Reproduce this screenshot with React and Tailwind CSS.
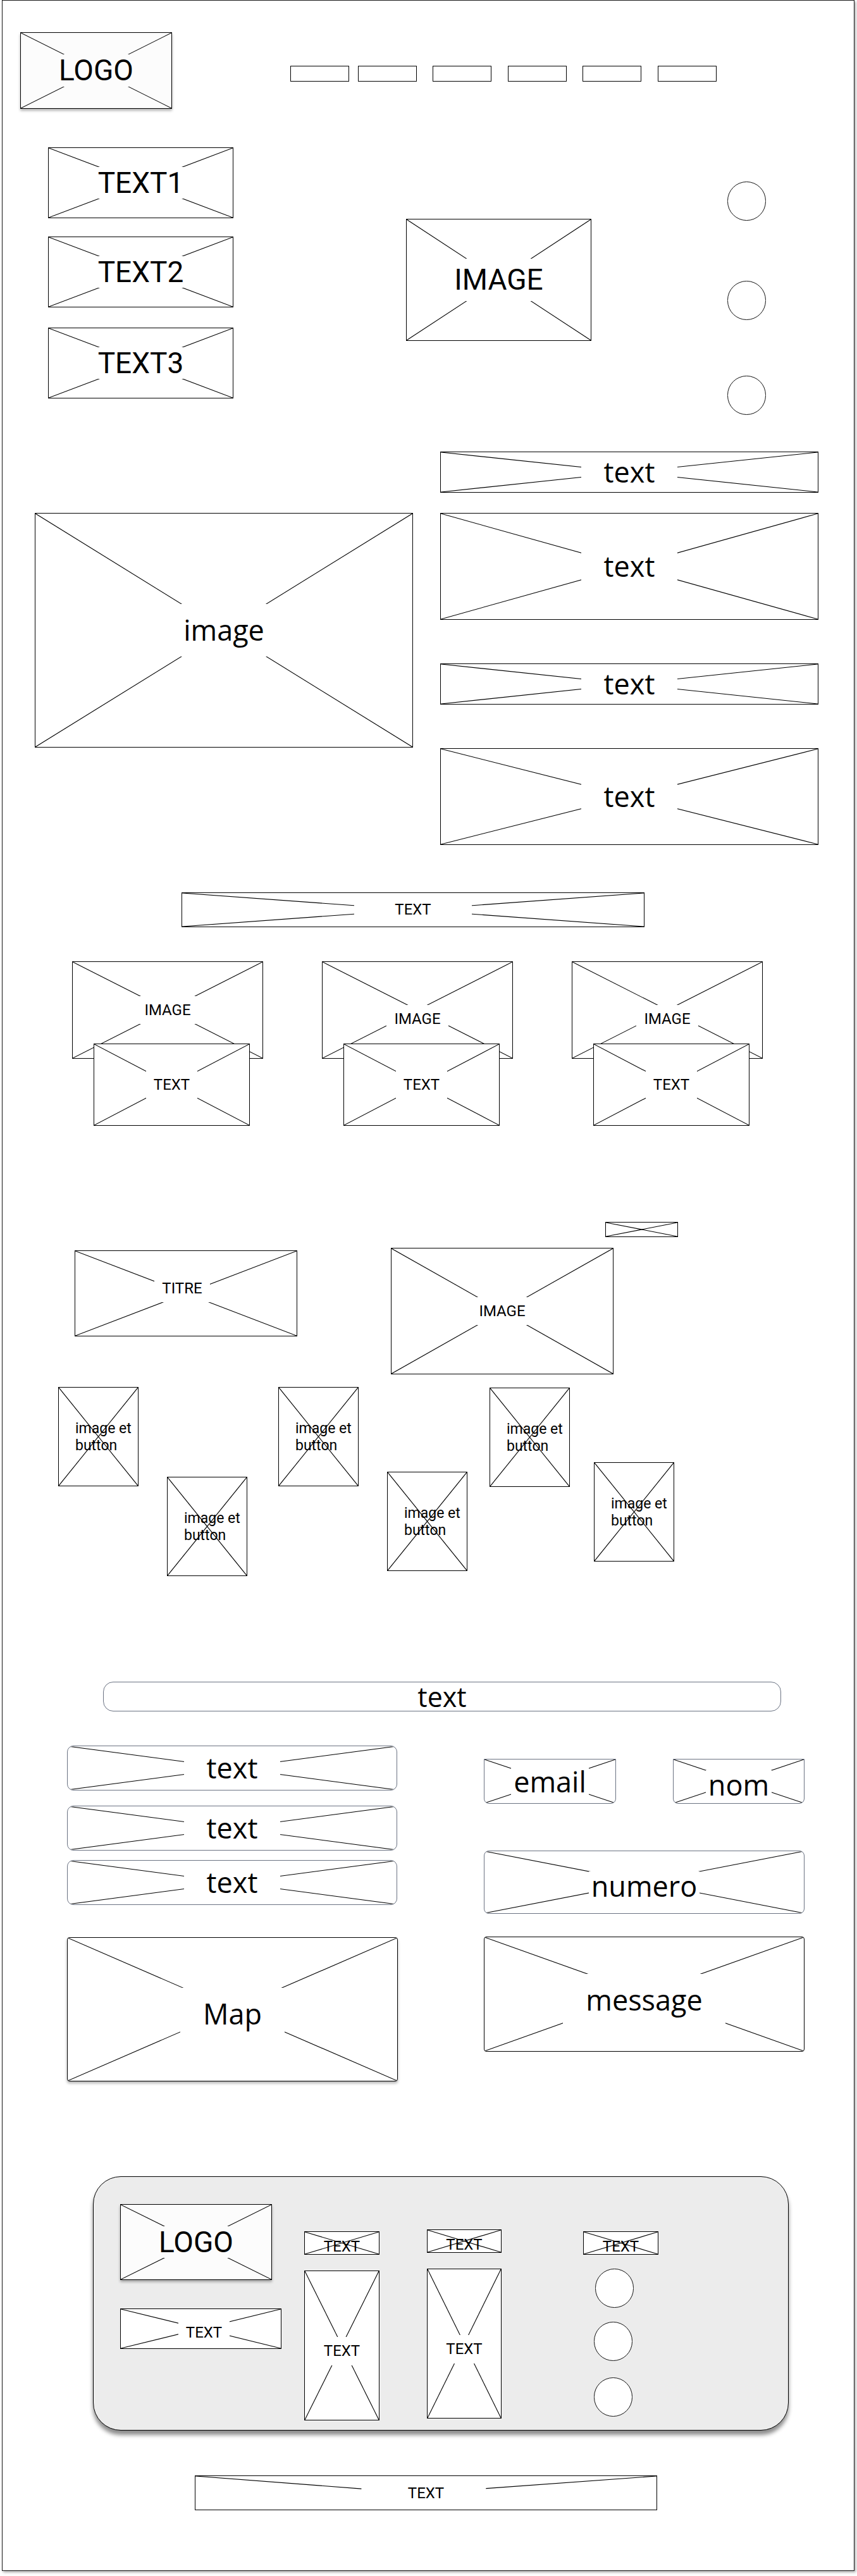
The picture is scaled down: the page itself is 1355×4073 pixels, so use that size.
import React from "react";

const R = "font-[Roboto,sans-serif]";
const O = "font-['Open_Sans',sans-serif]";

const bigR = `${R} bg-inherit px-[3px] text-[46px] leading-[1.1]`;
const imgR = `${R} bg-inherit px-3 py-2 text-[46px] leading-[1.1]`;
const txt = `${O} bg-inherit px-9 py-3 text-[45px] leading-[1.3]`;
const tight = `${O} bg-inherit px-1 text-[45px] leading-[1]`;
const smR = `${R} bg-inherit px-3 py-2 text-[24px] leading-[1.2]`;
const wideR = `${R} bg-inherit px-16 py-1 text-[24px] leading-[1.2]`;
const btn = `${R} self-center ml-[26px] mr-auto text-[23px] leading-[27px]`;

function Cross({ mode }) {
  if (mode === "top") {
    return (
      <svg className="pointer-events-none absolute inset-0 h-full w-full" viewBox="0 0 100 100" preserveAspectRatio="none">
        <line x1="0" y1="0" x2="36" y2="38" stroke="#000" strokeWidth="1.1" vectorEffect="non-scaling-stroke" />
        <line x1="100" y1="0" x2="63" y2="37" stroke="#000" strokeWidth="1.1" vectorEffect="non-scaling-stroke" />
      </svg>
    );
  }
  return (
    <svg className="pointer-events-none absolute inset-0 h-full w-full" viewBox="0 0 100 100" preserveAspectRatio="none">
      <line x1="0" y1="0" x2="100" y2="100" stroke="#000" strokeWidth="1.1" vectorEffect="non-scaling-stroke" />
      <line x1="100" y1="0" x2="0" y2="100" stroke="#000" strokeWidth="1.1" vectorEffect="non-scaling-stroke" />
    </svg>
  );
}

// wireframe placeholder: bordered box with an X and a label in the middle
function Box({ className = "", label, labelClass = "", lines = "x" }) {
  return (
    <div className={`relative flex shrink-0 items-center justify-center overflow-hidden border ${className}`}>
      {lines !== "none" && <Cross mode={lines} />}
      {label && <span className={`relative whitespace-pre-line text-black ${labelClass}`}>{label}</span>}
    </div>
  );
}

function Circle({ className = "" }) {
  return <div className={`h-[62px] w-[61px] shrink-0 rounded-full border border-[#111] bg-white ${className}`} />;
}

function Card({ labelShift }) {
  return (
    <div className="flex w-[302px] flex-col">
      <Box
        className="h-[154px] w-[302px] border-black bg-white"
        label="IMAGE"
        labelClass={`${smR} ${labelShift}`}
      />
      <Box className="relative -mt-[24px] ml-[34px] h-[130px] w-[247px] border-black bg-white" label="TEXT" labelClass={smR} />
    </div>
  );
}

export default function App() {
  return (
    <div className="min-h-screen bg-white text-black">
      <div className="ml-[3px] h-[4065px] w-[1348px] border border-[#1a1a1a] bg-white shadow-[2px_2px_4px_rgba(0,0,0,0.35)]">
        {/* header */}
        <div className="mt-[50px] flex items-start">
          <Box
            className="ml-[28px] h-[121px] w-[240px] border-black bg-[#fcfcfc] shadow-[0_3px_4px_rgba(0,0,0,0.3)]"
            label="LOGO"
            labelClass={bigR}
          />
          <nav className="ml-[187px] mt-[53px] flex">
            <div className="h-[25px] w-[93px] border border-black" />
            <div className="ml-[14px] h-[25px] w-[93px] border border-black" />
            <div className="ml-[25px] h-[25px] w-[93px] border border-black" />
            <div className="ml-[26px] h-[25px] w-[93px] border border-black" />
            <div className="ml-[25px] h-[25px] w-[93px] border border-black" />
            <div className="ml-[26px] h-[25px] w-[93px] border border-black" />
          </nav>
        </div>

        {/* hero */}
        <div className="mt-[61px] flex items-start">
          <div className="ml-[72px] flex flex-col">
            <Box className="h-[112px] w-[293px] border-black bg-white" label="TEXT1" labelClass={bigR} />
            <Box className="mt-[29px] h-[112px] w-[293px] border-black bg-white" label="TEXT2" labelClass={bigR} />
            <Box className="mt-[32px] h-[112px] w-[293px] border-black bg-white" label="TEXT3" labelClass={bigR} />
          </div>
          <Box className="ml-[273px] mt-[113px] h-[193px] w-[293px] border-black bg-white" label="IMAGE" labelClass={imgR} />
          <div className="ml-[215px] mt-[54px] flex flex-col">
            <Circle />
            <Circle className="mt-[95px]" />
            <Circle className="mt-[88px] bg-[#fdfcfd]" />
          </div>
        </div>

        {/* image + texts */}
        <div className="mt-[58px] flex items-start">
          <Box className="ml-[51px] mt-[97px] h-[371px] w-[598px] border-black bg-white" label="image" labelClass={txt} />
          <div className="ml-[43px] flex w-[598px] flex-col">
            <Box className="h-[65px] w-[598px] border-black bg-white" label="text" labelClass={txt} />
            <Box className="mt-[32px] h-[169px] w-[598px] border-black bg-white" label="text" labelClass={txt} />
            <Box className="mt-[69px] h-[65px] w-[598px] border-black bg-white" label="text" labelClass={txt} />
            <Box className="mt-[69px] h-[153px] w-[598px] border-black bg-white" label="text" labelClass={txt} />
          </div>
        </div>

        {/* cards */}
        <Box className="ml-[283px] mt-[75px] h-[55px] w-[732px] border-black bg-white" label="TEXT" labelClass={wideR} />
        <div className="ml-[110px] mt-[54px] flex items-start gap-[93px]">
          <Card labelShift="" />
          <Card labelShift="mt-[28px]" />
          <Card labelShift="mt-[28px]" />
        </div>

        {/* gallery */}
        <Box className="ml-[953px] mt-[152px] h-[24px] w-[115px] border-black bg-white" />
        <div className="mt-[17px] flex items-start">
          <Box className="ml-[114px] mt-[4px] h-[136px] w-[352px] border-black bg-white" label="TITRE" labelClass={`${smR} -mt-[16px] -ml-[12px]`} />
          <Box className="ml-[148px] h-[200px] w-[352px] border-black bg-white" label="IMAGE" labelClass={smR} />
        </div>
        <div className="flex items-start">
          <Box className="ml-[88px] mt-[20px] h-[157px] w-[127px] border-black bg-white" label={"image et\nbutton"} labelClass={btn} />
          <Box className="ml-[45px] mt-[162px] h-[157px] w-[127px] border-black bg-white" label={"image et\nbutton"} labelClass={btn} />
          <Box className="ml-[49px] mt-[20px] h-[157px] w-[127px] border-black bg-white" label={"image et\nbutton"} labelClass={btn} />
          <Box className="ml-[45px] mt-[154px] h-[157px] w-[127px] border-black bg-white" label={"image et\nbutton"} labelClass={btn} />
          <Box className="ml-[35px] mt-[21px] h-[157px] w-[127px] border-black bg-white" label={"image et\nbutton"} labelClass={btn} />
          <Box className="ml-[38px] mt-[139px] h-[157px] w-[127px] border-black bg-white" label={"image et\nbutton"} labelClass={btn} />
        </div>

        {/* contact */}
        <div className={`ml-[159px] mt-[167px] flex h-[47px] w-[1072px] items-center justify-center rounded-[16px] border border-gray-500 bg-white ${O} text-[43px] leading-none`}>
          text
        </div>
        <div className="mt-[54px] flex items-start">
          <div className="ml-[102px] flex w-[523px] flex-col">
            <Box className="h-[71px] w-[522px] rounded-[10px] border-gray-500 bg-white" label="text" labelClass={txt} />
            <Box className="mt-[24px] h-[71px] w-[522px] rounded-[10px] border-gray-500 bg-white" label="text" labelClass={txt} />
            <Box className="mt-[15px] h-[71px] w-[522px] rounded-[10px] border-gray-500 bg-white" label="text" labelClass={txt} />
            <Box className="mt-[51px] h-[228px] w-[523px] rounded-[4px] border-black bg-white shadow-[0_3px_4px_rgba(0,0,0,0.3)]" label="Map" labelClass={`${txt} mt-[14px]`} />
          </div>
          <div className="ml-[136px] mt-[21px] flex w-[507px] flex-col">
            <div className="flex">
              <Box className="h-[71px] w-[209px] rounded-b-[8px] border-gray-500 bg-white" label="email" labelClass={tight} />
              <Box className="ml-[90px] h-[71px] w-[208px] rounded-b-[8px] border-gray-500 bg-white" label="nom" labelClass={`${tight} mt-[10px]`} />
            </div>
            <Box className="mt-[74px] h-[100px] w-[507px] rounded-[8px] border-gray-500 bg-white" label="numero" labelClass={`${tight} mt-[10px]`} />
            <Box className="mt-[36px] h-[182px] w-[507px] rounded-[4px] border-black bg-white" label="message" labelClass={`${txt} mt-[18px]`} />
          </div>
        </div>

        {/* footer */}
        <footer className="ml-[143px] mt-[150px] flex h-[402px] w-[1100px] items-start rounded-[44px] border border-black bg-[#ececec] pl-[42px] pt-[43px] shadow-[0_7px_6px_rgba(0,0,0,0.45)]">
          <div className="flex flex-col">
            <Box
              className="h-[120px] w-[240px] border-black bg-[#fcfcfc] shadow-[0_3px_4px_rgba(0,0,0,0.3)]"
              label="LOGO"
              labelClass={`${R} bg-inherit px-[3px] text-[46px] leading-[1.1]`}
            />
            <Box className="mt-[45px] h-[64px] w-[255px] border-black bg-white" label="TEXT" labelClass={`${smR} mt-[12px] ml-[10px]`} />
          </div>
          <div className="ml-[36px] mt-[43px] flex flex-col">
            <Box className="h-[37px] w-[119px] border-black bg-white" label="TEXT" labelClass={`${R} text-[24px] leading-none mt-[10px]`} />
            <Box className="mt-[25px] h-[237px] w-[119px] border-black bg-white" label="TEXT" labelClass={`${smR} mt-[18px]`} />
          </div>
          <div className="ml-[75px] mt-[40px] flex flex-col">
            <Box className="h-[37px] w-[118px] border-black bg-white" label="TEXT" labelClass={`${R} text-[24px] leading-none mt-[10px]`} />
            <Box className="mt-[25px] h-[237px] w-[118px] border-black bg-white" label="TEXT" labelClass={`${smR} mt-[18px]`} />
          </div>
          <div className="ml-[129px] mt-[43px] flex flex-col">
            <Box className="h-[37px] w-[119px] border-black bg-white" label="TEXT" labelClass={`${R} text-[24px] leading-none mt-[10px]`} />
            <Circle className="ml-[19px] mt-[22px]" />
            <Circle className="ml-[17px] mt-[22px]" />
            <Circle className="ml-[17px] mt-[26px] bg-[#fdfcfd]" />
          </div>
        </footer>

        <Box className="ml-[304px] mt-[71px] h-[55px] w-[731px] border-black bg-white" lines="top" label="TEXT" labelClass={`${R} text-[24px] leading-none`} />
      </div>
    </div>
  );
}
